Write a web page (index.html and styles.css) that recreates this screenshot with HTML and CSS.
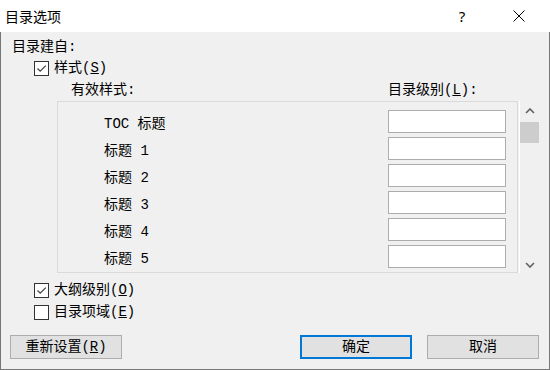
FILE: index.html
```html
<!DOCTYPE html>
<html lang="zh-CN">
<head>
<meta charset="utf-8">
<title>目录选项</title>
<link rel="stylesheet" href="styles.css">
</head>
<body>
<div class="window">
  <div class="titlebar">
    <span class="title">目录选项</span>
    <span class="help">?</span>
    <span class="close"><svg width="12" height="12" viewBox="0 0 12 12"><path d="M0.5 0.5 L11.5 11.5 M11.5 0.5 L0.5 11.5" stroke="#000" stroke-width="1" fill="none"/></svg></span>
  </div>
  <div class="content">
    <div class="build">目录建自:</div>
    <div class="check first">
      <span class="box"><svg width="13" height="13" viewBox="0 0 13 13"><path d="M2.5 6.5 L5.2 9.2 L10.8 3.6" stroke="#444" stroke-width="1.3" fill="none"/></svg></span>
      <span class="label">样式(<u>S</u>)</span>
    </div>
    <div class="headers">
      <span class="h-styles">有效样式:</span>
      <span class="h-level">目录级别(<u>L</u>):</span>
    </div>
    <div class="list-area">
      <div class="list">
        <div class="row"><span class="name">TOC 标题</span><span class="input"></span></div>
        <div class="row"><span class="name">标题 1</span><span class="input"></span></div>
        <div class="row"><span class="name">标题 2</span><span class="input"></span></div>
        <div class="row"><span class="name">标题 3</span><span class="input"></span></div>
        <div class="row"><span class="name">标题 4</span><span class="input"></span></div>
        <div class="row"><span class="name">标题 5</span><span class="input"></span></div>
      </div>
      <div class="scrollbar">
        <div class="arrow up"><svg width="10" height="6" viewBox="0 0 10 6"><path d="M1 5 L5 1 L9 5" stroke="#606060" stroke-width="1.6" fill="none"/></svg></div>
        <div class="thumb"></div>
        <div class="track"></div>
        <div class="arrow down"><svg width="10" height="6" viewBox="0 0 10 6"><path d="M1 1 L5 5 L9 1" stroke="#606060" stroke-width="1.6" fill="none"/></svg></div>
      </div>
    </div>
    <div class="check outline">
      <span class="box"><svg width="13" height="13" viewBox="0 0 13 13"><path d="M2.5 6.5 L5.2 9.2 L10.8 3.6" stroke="#444" stroke-width="1.3" fill="none"/></svg></span>
      <span class="label">大纲级别(<u>O</u>)</span>
    </div>
    <div class="check fields">
      <span class="box"></span>
      <span class="label">目录项域(<u>E</u>)</span>
    </div>
    <div class="buttons">
      <button class="btn">重新设置(<u>R</u>)</button>
      <button class="btn default ok">确定</button>
      <button class="btn">取消</button>
    </div>
  </div>
</div>
</body>
</html>
```
FILE: styles.css
```css
html, body {
  margin: 0;
  padding: 0;
}
body {
  width: 550px;
  height: 370px;
  overflow: hidden;
  font-family: "Liberation Mono", "Noto Sans CJK SC", monospace;
  font-size: 14px;
  color: #000;
}
.window {
  width: 550px;
  height: 370px;
  display: flex;
  flex-direction: column;
}
.titlebar {
  height: 32px;
  flex: none;
  background: #fff;
  display: flex;
  align-items: center;
  font-family: "Noto Sans CJK SC", sans-serif;
}
.title {
  flex: 1;
  padding-left: 5px;
  font-size: 14px;
}
.help {
  width: 46px;
  margin-right: 11px;
  text-align: center;
  font-family: "Noto Sans", sans-serif;
  font-size: 15px;
}
.close {
  width: 46px;
  margin-right: 8px;
  display: flex;
  justify-content: center;
}
.content {
  flex: 1;
  background: #f0f0f0;
  border: 1px solid #777;
  border-top: none;
  display: flex;
  flex-direction: column;
}
.build {
  margin: 5px 0 0 11px;
  height: 20px;
  line-height: 20px;
}
.check {
  display: flex;
  align-items: center;
  gap: 5px;
  height: 15px;
  line-height: 15px;
  margin-left: 33px;
}
.check.first { margin-top: 4px; }
.check.outline { margin-top: 10px; }
.check.fields { margin-top: 7px; }
.box {
  width: 15px;
  height: 15px;
  box-sizing: border-box;
  border: 1px solid #333;
  background: #fff;
  display: flex;
  align-items: center;
  justify-content: center;
  flex: none;
}
.box svg { display: block; }
.headers {
  margin-top: 4px;
  height: 20px;
  line-height: 20px;
  display: flex;
}
.h-styles {
  margin-left: 70px;
  width: 317px;
  flex: none;
}
.list-area {
  margin: 1px 0 0 56px;
  height: 172px;
  display: flex;
}
.list {
  width: 461px;
  box-sizing: border-box;
  border: 1px solid #dadada;
  padding: 8px 11px 4px 46px;
  display: flex;
  flex-direction: column;
  gap: 4px;
}
.row {
  height: 23px;
  display: flex;
  align-items: center;
  justify-content: space-between;
}
.input {
  width: 118px;
  height: 23px;
  box-sizing: border-box;
  border: 1px solid #adadad;
  background: #fff;
}
.scrollbar {
  margin-left: 1px;
  width: 20px;
  border-left: 1px solid #fff;
  display: flex;
  flex-direction: column;
}
.arrow {
  display: flex;
  align-items: center;
  justify-content: center;
}
.arrow svg { display: block; }
.arrow.up { height: 20px; }
.arrow.down { height: 17px; }
.thumb {
  margin-top: 1px;
  width: 19px;
  height: 21px;
  background: #cdcdcd;
}
.track { flex: 1; }
.buttons {
  margin-top: 15px;
  padding: 0 10px 0 9px;
  display: flex;
  gap: 15px;
}
.btn {
  width: 112px;
  height: 24px;
  box-sizing: border-box;
  padding: 0;
  margin: 0;
  background: #e1e1e1;
  border: 1px solid #adadad;
  font-family: inherit;
  font-size: 14px;
  color: #000;
  line-height: 20px;
}
.btn.ok { margin-left: auto; }
.btn.default {
  border: 2px solid #0078d7;
}
```
